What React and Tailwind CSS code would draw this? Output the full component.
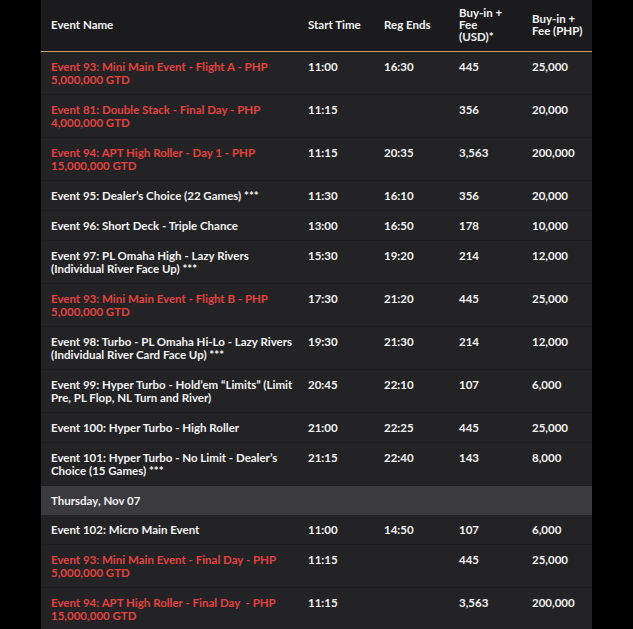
import React from 'react';

const RED = 'text-[#e2423f]';

// each row: [name lines, start, regEnds, usd, php, highlight]
const day1 = [
  [['Event 93: Mini Main Event - Flight A - PHP', '5,000,000 GTD'], '11:00', '16:30', '445', '25,000', true],
  [['Event 81: Double Stack - Final Day - PHP', '4,000,000 GTD'], '11:15', '', '356', '20,000', true],
  [['Event 94: APT High Roller - Day 1 - PHP', '15,000,000 GTD'], '11:15', '20:35', '3,563', '200,000', true],
  [['Event 95: Dealer\u2019s Choice (22 Games) ***'], '11:30', '16:10', '356', '20,000', false],
  [['Event 96: Short Deck - Triple Chance'], '13:00', '16:50', '178', '10,000', false],
  [['Event 97: PL Omaha High - Lazy Rivers', '(Individual River Face Up) ***'], '15:30', '19:20', '214', '12,000', false],
  [['Event 93: Mini Main Event - Flight B - PHP', '5,000,000 GTD'], '17:30', '21:20', '445', '25,000', true],
  [['Event 98: Turbo - PL Omaha Hi-Lo - Lazy Rivers', '(Individual River Card Face Up) ***'], '19:30', '21:30', '214', '12,000', false],
  [['Event 99: Hyper Turbo - Hold\u2019em \u201cLimits\u201d (Limit', 'Pre, PL Flop, NL Turn and River)'], '20:45', '22:10', '107', '6,000', false],
  [['Event 100: Hyper Turbo - High Roller'], '21:00', '22:25', '445', '25,000', false],
  [['Event 101: Hyper Turbo - No Limit - Dealer\u2019s', 'Choice (15 Games) ***'], '21:15', '22:40', '143', '8,000', false],
];

const day2 = [
  [['Event 102: Micro Main Event'], '11:00', '14:50', '107', '6,000', false],
  [['Event 93: Mini Main Event - Final Day - PHP', '5,000,000 GTD'], '11:15', '', '445', '25,000', true],
  [['Event 94: APT High Roller - Final Day  - PHP', '15,000,000 GTD'], '11:15', '', '3,563', '200,000', true],
];

function Row({ row }) {
  const [lines, start, reg, usd, php, hot] = row;
  return (
    <tr className="bg-[#232326] border-b border-[#1c1c1f] align-top">
      <td className={`pl-[10px] pr-2 py-[8px] whitespace-pre ${hot ? RED : 'text-[#f2f2f2]'}`}>
        {lines.map((l, i) => (
          <div key={i}>{l}</div>
        ))}
      </td>
      <td className="pl-[10px] pt-[8px]">{start}</td>
      <td className="pl-[10px] pt-[8px]">{reg}</td>
      <td className="pl-[10px] pt-[8px]">{usd}</td>
      <td className="pl-[10px] pt-[8px]">{php}</td>
    </tr>
  );
}

export default function App() {
  return (
    <div className="w-[633px] h-[629px] bg-black overflow-hidden pl-[41px]" style={{ fontFamily: 'Lato, "Open Sans", sans-serif' }}>
      <table className="w-[551px] table-fixed border-collapse text-[11.5px] leading-[13px] font-bold text-[#f2f2f2]">
        <colgroup>
          <col className="w-[257px]" />
          <col className="w-[76px]" />
          <col className="w-[75px]" />
          <col className="w-[73px]" />
          <col className="w-[70px]" />
        </colgroup>
        <thead>
          <tr className="h-[51px] bg-[#1b1b1e] border-b border-[#c9a166] text-left align-middle leading-[12px]">
            <th className="pl-[10px]">Event Name</th>
            <th className="pl-[10px]">Start Time</th>
            <th className="pl-[10px]">Reg Ends</th>
            <th className="pl-[10px]">
              Buy-in +<br />Fee<br />(USD)*
            </th>
            <th className="pl-[10px]">
              Buy-in +<br />Fee (PHP)
            </th>
          </tr>
        </thead>
        <tbody>
          {day1.map((r, i) => (
            <Row key={i} row={r} />
          ))}
          <tr className="bg-[#3a3a3f] h-[30px] align-middle">
            <td colSpan={5} className="pl-[10px]">Thursday, Nov 07</td>
          </tr>
          {day2.map((r, i) => (
            <Row key={i} row={r} />
          ))}
        </tbody>
      </table>
    </div>
  );
}
